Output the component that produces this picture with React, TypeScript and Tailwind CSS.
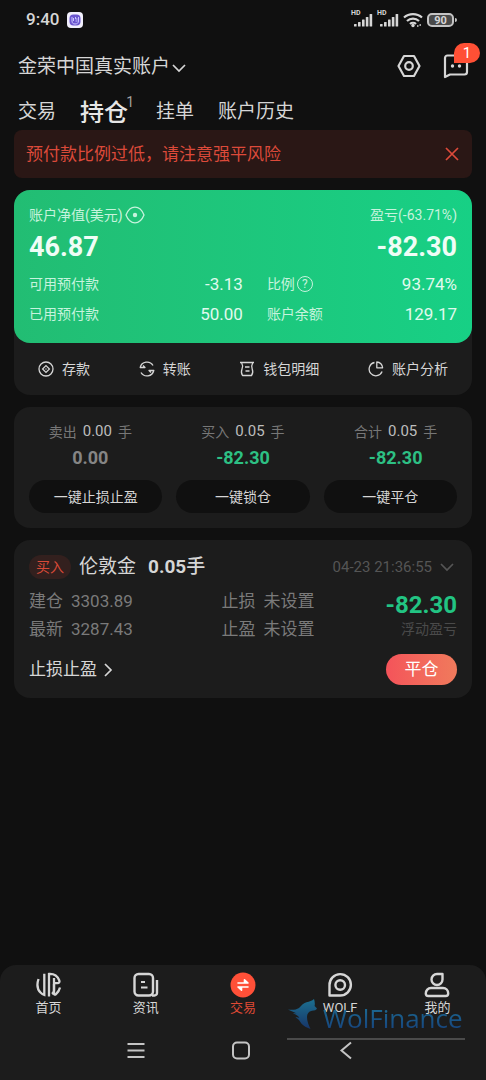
import React, { useState } from 'react';

const tabs = ['交易', '持仓', '挂单', '账户历史'];

const summary = [
  { label: '卖出', lots: '0.00', value: '0.00', color: 'text-[#858585]' },
  { label: '买入', lots: '0.05', value: '-82.30', color: 'text-[#2dc084]' },
  { label: '合计', lots: '0.05', value: '-82.30', color: 'text-[#2dc084]' },
];

const quickActions = ['一键止损止盈', '一键锁仓', '一键平仓'];

const Chevron: React.FC<{ className?: string }> = ({ className }) => (
  <svg className={className} width="14" height="14" viewBox="0 0 14 14" fill="none" stroke="currentColor" strokeWidth="1.700">
    <path d="M1 4l6 6 6-6" />
  </svg>
);

const SignalIcon: React.FC = () => (
  <span className="relative">
    <span className="absolute -top-0.5 left-0 text-[7px] leading-none font-bold">HD</span>
    <svg width="22" height="16" viewBox="0 0 22 16" fill="currentColor">
      <rect x="3" y="12" width="2.600" height="2.500" rx=".5" />
      <rect x="7" y="10" width="2.600" height="4.500" rx=".5" />
      <rect x="11" y="7.500" width="2.600" height="7" rx=".5" />
      <rect x="14.800" y="5" width="2.600" height="9.500" rx=".5" />
      <rect x="18.600" y="2" width="2.600" height="12.500" rx=".5" />
    </svg>
  </span>
);

const WifiIcon: React.FC = () => (
  <svg width="20" height="16" viewBox="0 0 20 16" fill="none" stroke="currentColor" strokeWidth="2.200">
    <path d="M1 5.500c5-4.600 13-4.600 18 0M4 9c3.400-3.200 8.600-3.200 12 0M7 12c1.700-1.600 4.300-1.600 6 0" />
    <circle cx="10" cy="13.500" r="1.700" fill="currentColor" stroke="none" />
    <path d="M14 14h1.500M16.500 13h1.500" strokeWidth="1.500" />
  </svg>
);

const BatteryIcon: React.FC = () => (
  <span className="flex items-center">
    <span className="flex h-[14px] w-[27px] items-center justify-center rounded-[5px] border-2 border-[#c4c4c4] bg-[#4a4a4a] text-[11px] leading-none font-bold">90</span>
    <span className="ml-px h-1 w-0.5 rounded-r bg-[#c4c4c4]"></span>
  </span>
);

const AppBadge: React.FC = () => (
  <svg width="16" height="16" viewBox="0 0 16 16">
    <rect width="16" height="16" rx="4" fill="#f1effc" />
    <rect x="2.500" y="2.500" width="11" height="11" rx="4" fill="#6a55cf" />
    <path d="M5 5v4c0 2 1 3 3 3s3.500-1 3.500-3V5M6.500 6v3M8.500 5v2h2M8.500 9h2" stroke="#c9c5ff" strokeWidth="1" fill="none" />
  </svg>
);

const SettingsIcon: React.FC = () => (
  <svg width="24" height="24" viewBox="0 0 24 24" fill="none" stroke="currentColor" strokeWidth="2.200" strokeLinejoin="round">
    <path d="M7 2h10l5.500 10L17 22H7L1.500 12z" />
    <circle cx="12" cy="12" r="3.800" />
  </svg>
);

const MessageIcon: React.FC = () => (
  <svg width="26" height="26" viewBox="0 0 26 26" fill="none" stroke="currentColor" strokeWidth="2.200" strokeLinejoin="round">
    <path d="M2 24V5a2.500 2.500 0 0 1 2.500-2.500h17A2.500 2.500 0 0 1 24 5v14a2.500 2.500 0 0 1-2.500 2.500H7z" />
    <circle cx="9.500" cy="13" r="1.700" fill="currentColor" stroke="none" />
    <circle cx="16.500" cy="13" r="1.700" fill="currentColor" stroke="none" />
  </svg>
);

const CloseIcon: React.FC = () => (
  <svg width="14" height="14" viewBox="0 0 14 14" stroke="currentColor" strokeWidth="1.700">
    <path d="M1 1l12 12M13 1 1 13" />
  </svg>
);

const EyeIcon: React.FC = () => (
  <svg width="20" height="18" viewBox="0 0 20 18" fill="none" stroke="currentColor" strokeWidth="1.300">
    <path d="M1 9c2-5 5.200-7.800 9-7.800S17 4 19 9c-2 5-5.200 7.800-9 7.800S3 14 1 9z" />
    <circle cx="10" cy="9" r="2.200" fill="currentColor" stroke="none" />
  </svg>
);

const HelpIcon: React.FC = () => (
  <span className="flex size-4 items-center justify-center rounded-full border border-current text-xs leading-none">?</span>
);

const DepositIcon: React.FC = () => (
  <svg width="16" height="16" viewBox="0 0 16 16" fill="none" stroke="currentColor" strokeWidth="1.300">
    <circle cx="8" cy="8" r="7" />
    <path d="M8 4.600 11.400 8 8 11.400 4.600 8z" />
    <circle cx="8" cy="8" r=".7" fill="currentColor" stroke="none" />
  </svg>
);

const TransferIcon: React.FC = () => (
  <svg width="16" height="16" viewBox="0 0 16 16" fill="none" stroke="currentColor" strokeWidth="1.300" strokeLinejoin="round">
    <path d="M14 4.500A7 7 0 0 0 1.200 6.500H6L4 4.500" />
    <path d="M2 11.500A7 7 0 0 0 14.800 9.500H10l2 2" />
  </svg>
);

const WalletIcon: React.FC = () => (
  <svg width="16" height="16" viewBox="0 0 16 16" fill="none" stroke="currentColor" strokeWidth="1.300" strokeLinejoin="round">
    <path d="M1 1.500h14M2.500 1.500C4 4 3.800 6 3 8s-.8 4.500.5 6.500h9C14.300 12 14 10 13.200 8s-.7-4 .6-6.500" />
    <path d="M6 6h4.500M6.500 10h4" />
  </svg>
);

const PieIcon: React.FC = () => (
  <svg width="16" height="16" viewBox="0 0 16 16" fill="none" stroke="currentColor" strokeWidth="1.300" strokeLinejoin="round">
    <path d="M6.500 1.500a6.700 6.700 0 1 0 7.600 9" />
    <path d="M8.800 1v5.800h5.800c0-3.200-2.600-5.800-5.800-5.800z" />
  </svg>
);

const HomeLogo: React.FC = () => (
  <svg width="26" height="26" viewBox="0 0 26 26" fill="none" stroke="currentColor" strokeWidth="2.300">
    <path d="M2.500 7C.8 12 1.500 17.500 4.500 20.500c1 1 2.200 2 3.800 2.500V1.800" />
    <path d="M13 24.500V2c5-.3 8.500 2 10.300 6.500.6 1.600-.3 2.700-1.800 2.700h-3" />
    <path d="M18 6v12.500c0 1.500-.8 2.500-2 3.500" />
    <path d="M18 12v9.500c0 1.300 1 1.500 2 .6 1.800-1.600 3.300-3.600 4-6.600" />
  </svg>
);

const NewsIcon: React.FC = () => (
  <svg width="26" height="26" viewBox="0 0 26 26" fill="none" stroke="currentColor" strokeWidth="2.400" strokeLinejoin="round">
    <rect x="1.500" y="2" width="18.500" height="21.500" rx="4" />
    <path d="M19 23.500h2.500A2.500 2.500 0 0 0 24 21V8" />
    <path d="M8 10h4M8 15.500h6.500" strokeWidth="2" />
  </svg>
);

const TradeIcon: React.FC = () => (
  <svg width="26" height="26" viewBox="0 0 26 26">
    <circle cx="13" cy="13" r="12.500" fill="#ff5038" />
    <path d="M8 11h10l-3.500-3.200V11zM18 15H8l3.500 3.200V15z" fill="#fff" stroke="#fff" strokeWidth="1.600" strokeLinejoin="round" />
  </svg>
);

const WolfIcon: React.FC = () => (
  <svg width="26" height="26" viewBox="0 0 26 26" fill="none" stroke="currentColor" strokeWidth="2.400" strokeLinejoin="round">
    <path d="M2.500 23.500V13A10.700 10.700 0 1 1 13.200 23.500z" />
    <circle cx="13.200" cy="13" r="4.800" />
  </svg>
);

const MineIcon: React.FC = () => (
  <svg width="26" height="26" viewBox="0 0 26 26" fill="none" stroke="currentColor" strokeWidth="2.400" strokeLinejoin="round">
    <path d="M18.500 2H13a5.500 5.500 0 1 0 5.500 5.500z" />
    <path d="M7 16h12c3 0 5.200 2.500 5.200 5.500 0 1.500-1 2.500-2.500 2.500H4.300c-1.500 0-2.500-1-2.500-2.500C1.800 18.500 4 16 7 16z" />
  </svg>
);

const WolfMark: React.FC = () => (
  <svg width="32" height="32" viewBox="0 0 32 32">
    <defs>
      <linearGradient id="wolf" x1="0" y1="0" x2="0" y2="1">
        <stop offset="0" stopColor="#1c7090" />
        <stop offset="1" stopColor="#173468" />
      </linearGradient>
    </defs>
    <path d="M27 1c.6 2 1.200 4.500.6 7l2.400 2.500c-.8 1.800-2.500 2-5 2.300-3.500.7-5 3.200-5 6.200 0 4 1.500 8 3.500 12-5-1.500-9-4.500-10.500-7.500-1-2-2.500-3-4.500-4 1.300-.3 2.500-.2 3.800.4-1.200-2.300-3.300-3.500-6.300-4.400 1.500-.3 3-.2 4.500.3C7.500 14 4.500 13.500 1 11.500c4 .6 8 .5 11-1.500C14.500 7.500 16 5 19.500 4.200 22.500 3.500 25 3 27 1z" fill="url(#wolf)" />
  </svg>
);

const actions = [
  { label: '存款', icon: <DepositIcon /> },
  { label: '转账', icon: <TransferIcon /> },
  { label: '钱包明细', icon: <WalletIcon /> },
  { label: '账户分析', icon: <PieIcon /> },
];

const navItems = [
  { label: '首页', icon: <HomeLogo /> },
  { label: '资讯', icon: <NewsIcon /> },
  { label: '交易', icon: <TradeIcon /> },
  { label: 'WOLF', icon: <WolfIcon /> },
  { label: '我的', icon: <MineIcon /> },
];

const App: React.FC = () => {
  const [activeTab, setActiveTab] = useState('持仓');
  const [activeNav, setActiveNav] = useState('交易');
  const [showAlert, setShowAlert] = useState(true);

  return (
    <div lang="zh-CN" className="flex min-h-screen flex-col bg-[#101010] font-['Roboto','Noto_Sans_CJK_SC',sans-serif] text-[#d6d6d6]">
      {/* Status bar */}
      <div className="flex h-10 items-center justify-between pr-[29px] pl-[26px]">
        <div className="flex items-center gap-2">
          <span className="text-[17px] font-medium">9:40</span>
          <AppBadge />
        </div>
        <div className="flex items-center gap-1">
          <SignalIcon />
          <SignalIcon />
          <WifiIcon />
          <BatteryIcon />
        </div>
      </div>

      {/* Account header */}
      <header className="flex h-[52px] items-center justify-between pr-[17px] pl-[18px]">
        <button className="flex items-center gap-0.5 pt-[3px] text-[19px]">
          金荣中国真实账户
          <Chevron />
        </button>
        <div className="flex items-center gap-[22px]">
          <button aria-label="设置"><SettingsIcon /></button>
          <button aria-label="消息" className="relative">
            <MessageIcon />
            <span className="absolute -top-2.5 left-[11px] flex h-5 w-[26px] items-center justify-center rounded-full rounded-bl-none bg-[#ff5035] text-[15px] text-white">1</span>
          </button>
        </div>
      </header>

      {/* Tabs */}
      <nav className="flex h-[38px] items-center gap-6 px-[18px] pt-[3px] text-[19px]">
        {tabs.map((tab) => (
          <button
            key={tab}
            onClick={() => setActiveTab(tab)}
            className={tab === activeTab ? 'relative mr-1 text-2xl font-medium text-[#e6e6e6]' : ''}
          >
            {tab}
            {tab === '持仓' && (
              <span className="absolute -top-0.5 -right-1.5 text-sm leading-none font-normal text-[#a0a0a0]">1</span>
            )}
          </button>
        ))}
      </nav>

      <main className="flex flex-1 flex-col gap-3 px-[14px] pb-6">
        {showAlert && (
          <div className="flex h-12 items-center justify-between rounded-lg bg-[#2a1715] pr-[13px] pl-3 text-[17px] text-[#dc4a3a]">
            <span className="pt-0.5">预付款比例过低，请注意强平风险</span>
            <button aria-label="关闭" onClick={() => setShowAlert(false)}>
              <CloseIcon />
            </button>
          </div>
        )}

        {/* Account card */}
        <section className="rounded-2xl bg-[#1c1c1c]">
          <div className="rounded-2xl bg-linear-to-r from-[#22bd73] to-[#17d085] px-[15px] pt-[13px] pb-[14px] text-sm text-[#c6f3dd]">
            <div className="flex h-6 items-center justify-between">
              <span className="flex items-center gap-0.5">账户净值(美元)<EyeIcon /></span>
              <span>盈亏(-63.71%)</span>
            </div>
            <div className="mb-0.5 flex h-10 items-center justify-between text-[27px] font-bold text-[#effdf6]">
              <span>46.87</span>
              <span>-82.30</span>
            </div>
            <dl className="grid grid-cols-[9fr_8fr] gap-x-6">
              <div className="flex h-[30px] items-center justify-between">
                <dt>可用预付款</dt>
                <dd className="text-[17px] text-[#e0faee]">-3.13</dd>
              </div>
              <div className="flex h-[30px] items-center justify-between">
                <dt className="flex items-center gap-0.5">比例<HelpIcon /></dt>
                <dd className="text-[17px] text-[#e0faee]">93.74%</dd>
              </div>
              <div className="flex h-[30px] items-center justify-between">
                <dt>已用预付款</dt>
                <dd className="text-[17px] text-[#e0faee]">50.00</dd>
              </div>
              <div className="flex h-[30px] items-center justify-between">
                <dt>账户余额</dt>
                <dd className="text-[17px] text-[#e0faee]">129.17</dd>
              </div>
            </dl>
          </div>
          <div className="flex h-[52px] items-center justify-between px-6 text-sm">
            {actions.map((action) => (
              <button key={action.label} className="flex items-center gap-2">
                {action.icon}
                {action.label}
              </button>
            ))}
          </div>
        </section>

        {/* Lots summary */}
        <section className="rounded-2xl bg-[#1c1c1c] pt-3 pb-[15px] text-center">
          <div className="grid grid-cols-3">
            {summary.map((item) => (
              <div key={item.label}>
                <div className="flex h-[26px] items-center justify-center gap-1.5 text-sm text-[#777]">
                  <span>{item.label}</span>
                  <span className="text-[15px] text-[#bdbdbd]">{item.lots}</span>
                  <span>手</span>
                </div>
                <div className={`text-lg leading-[26px] font-bold ${item.color}`}>{item.value}</div>
              </div>
            ))}
          </div>
          <div className="mt-[9px] grid grid-cols-3 gap-[14px] px-[15px]">
            {quickActions.map((label) => (
              <button key={label} className="h-[33px] rounded-full bg-[#101010] text-sm">{label}</button>
            ))}
          </div>
        </section>

        {/* Position */}
        <section className="rounded-2xl bg-[#1c1c1c] px-[15px] py-[13px]">
          <div className="flex h-7 items-center justify-between">
            <div className="flex items-center text-[19px]">
              <span className="mr-2 flex h-6 items-center rounded-full bg-[#33201e] px-[7px] text-sm text-[#d84a38]">买入</span>
              <span>伦敦金</span>
              <span className="ml-3 font-bold">0.05<span className="font-medium">手</span></span>
            </div>
            <button className="flex items-center gap-2 pr-[3px] text-[15px] text-[#555]">
              04-23 21:36:55
              <Chevron />
            </button>
          </div>
          <div className="mt-1.5 grid grid-cols-[9fr_6fr_5fr] text-[17px] leading-7 text-[#7a7a7a]">
            <div>
              <p className="flex gap-2"><span>建仓</span><span>3303.89</span></p>
              <p className="flex gap-2"><span>最新</span><span>3287.43</span></p>
            </div>
            <div>
              <p className="flex gap-2"><span>止损</span><span>未设置</span></p>
              <p className="flex gap-2"><span>止盈</span><span>未设置</span></p>
            </div>
            <div className="flex flex-col items-end pt-1">
              <span className="text-2xl leading-7 font-bold text-[#22c483]">-82.30</span>
              <span className="text-sm leading-5 text-[#4a4a4a]">浮动盈亏</span>
            </div>
          </div>
          <div className="mt-[11px] flex items-center justify-between text-[17px]">
            <button className="flex items-center gap-1">
              止损止盈
              <Chevron className="-rotate-90" />
            </button>
            <button className="h-[31px] w-[71px] rounded-full bg-linear-to-r from-[#f4535a] to-[#f07a5c] text-white">平仓</button>
          </div>
        </section>
      </main>

      {/* Bottom navigation */}
      <footer className="relative rounded-t-2xl bg-[#1c1c1c]">
        <nav className="grid grid-cols-5 pt-[7px]">
          {navItems.map((item) => (
            <button
              key={item.label}
              onClick={() => setActiveNav(item.label)}
              className={`flex flex-col items-center text-[13px] leading-5 ${item.label === activeNav ? 'text-[#e04a35]' : 'text-[#d6d6d6]'}`}
            >
              {item.icon}
              {item.label}
            </button>
          ))}
        </nav>
        <div className="mt-1 flex h-[58px] items-center justify-center gap-[85px] pr-1 text-[#c4c4c4]">
          <button aria-label="菜单">
            <svg width="20" height="20" viewBox="0 0 20 20" stroke="currentColor" strokeWidth="2">
              <path d="M1.500 3h17M1.500 9.500h17M1.500 16h17" />
            </svg>
          </button>
          <button aria-label="主屏幕">
            <svg width="20" height="20" viewBox="0 0 20 20" fill="none" stroke="currentColor" strokeWidth="2">
              <rect x="2" y="1.500" width="16" height="16" rx="4" />
            </svg>
          </button>
          <button aria-label="返回">
            <svg width="20" height="20" viewBox="0 0 20 20" fill="none" stroke="currentColor" strokeWidth="2">
              <path d="M15 1.500 5.500 9.500l9.500 8" />
            </svg>
          </button>
        </div>

        {/* Brand mark over the navigation */}
        <div className="pointer-events-none absolute right-[21px] bottom-10 flex w-[178px] items-end border-b-2 border-[#4a4a4a] pb-1">
          <span className="mb-1"><WolfMark /></span>
          <span className="ml-1 bg-linear-to-b from-[#1f7396] to-[#163c78] bg-clip-text font-['Open_Sans',sans-serif] text-[26px] leading-8 text-transparent">WolFinance</span>
        </div>
      </footer>
    </div>
  );
};

export default App;
